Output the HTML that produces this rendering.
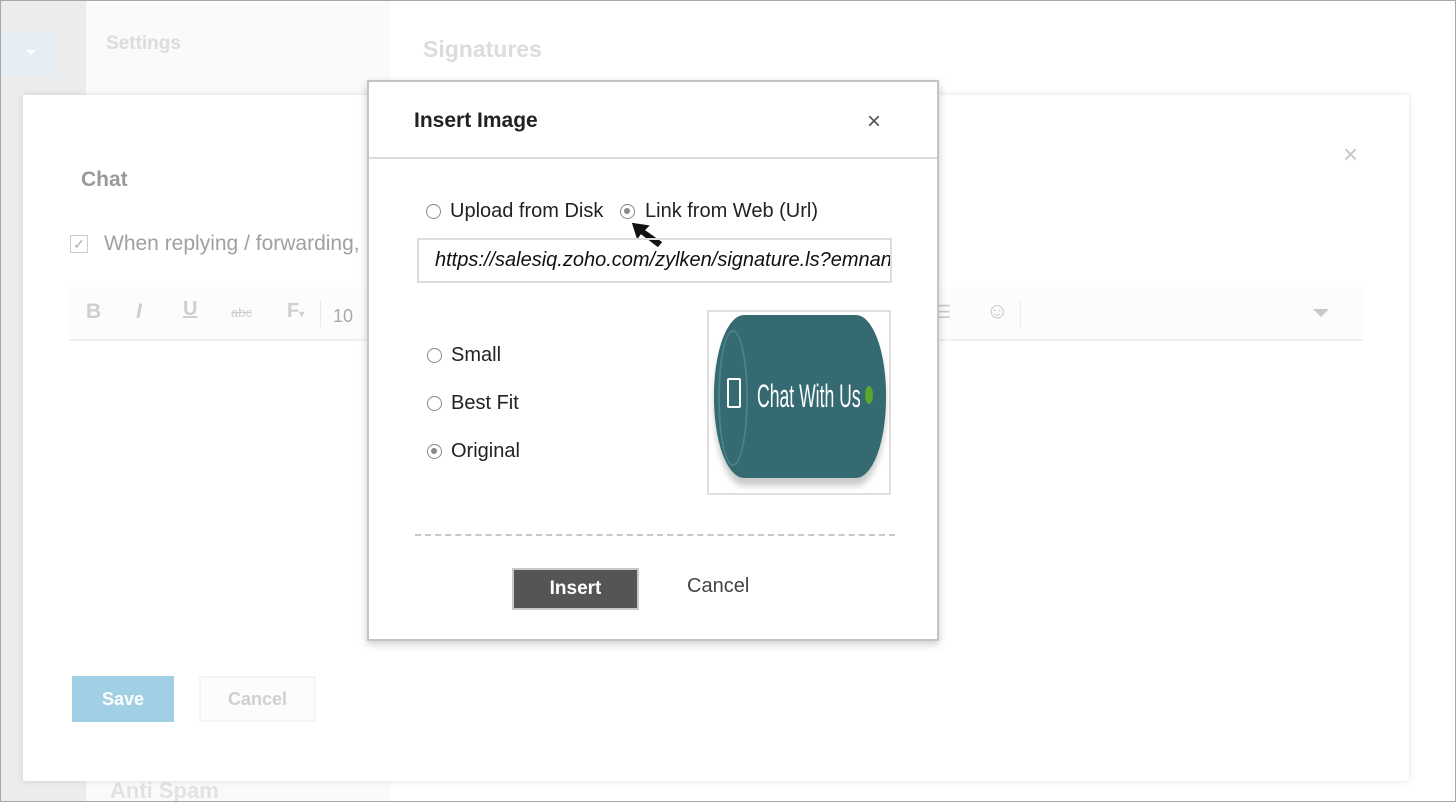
<!DOCTYPE html>
<html><head><meta charset="utf-8"><style>
*{box-sizing:border-box;margin:0;padding:0}
body{width:1456px;height:802px;position:relative;overflow:hidden;font-family:"Liberation Sans",sans-serif;background:#fff}
.abs{position:absolute}
.frame{left:0;top:0;width:1456px;height:802px;border:1px solid #a8a8a8;z-index:50;pointer-events:none}
.radio{position:absolute;width:15px;height:15px;border:1.5px solid #8a8a8a;border-radius:50%;background:#fff}
.radio.on::after{content:"";position:absolute;left:3px;top:3px;width:6px;height:6px;border-radius:50%;background:#888}
.lbl{position:absolute;font-size:20px;color:#222}
</style></head><body>
<div class="abs frame"></div>
<div class="abs" style="left:0;top:0;width:86px;height:802px;background:#ececec"></div>
<div class="abs" style="left:0;top:32px;width:55px;height:44px;background:#e6eef5"></div>
<div class="abs" style="left:26px;top:50px;width:0;height:0;border-left:5px solid transparent;border-right:5px solid transparent;border-top:5px solid #fff"></div>
<div class="abs" style="left:86px;top:0;width:304px;height:802px;background:#fafafa"></div>
<div class="abs" style="left:106px;top:33px;font-size:19px;color:#dcdcdc;font-weight:bold">Settings</div>
<div class="abs" style="left:423px;top:36px;font-size:23px;color:#dcdcdc;font-weight:bold">Signatures</div>
<div class="abs" style="left:110px;top:778px;font-size:22px;color:#e2e2e2;font-weight:bold">Anti Spam</div>
<div class="abs" style="left:23px;top:95px;width:1386px;height:686px;background:#fff;box-shadow:0 0 6px rgba(0,0,0,.12)">
  <div class="abs" style="left:58px;top:73px;font-size:21px;color:#999;font-weight:bold">Chat</div>
  <div class="abs" style="left:1320px;top:44px;font-size:26px;color:#c8c8c8">×</div>
  <div class="abs" style="left:47px;top:140px;width:18px;height:18px;border:1px solid #ccc;color:#aaa;font-size:14px;line-height:16px;text-align:center">✓</div>
  <div class="abs" style="left:81px;top:137px;font-size:21px;color:#a0a0a0">When replying / forwarding,</div>
  <div class="abs" style="left:46px;top:192px;width:1294px;height:54px;background:#fcfcfc;border-bottom:2px solid #f0f0f0"></div>
  <div class="abs" style="left:63px;top:205px;font-size:21px;color:#cfcfcf;font-weight:bold">B</div>
  <div class="abs" style="left:113px;top:205px;font-size:21px;color:#cfcfcf;font-style:italic;font-weight:bold">I</div>
  <div class="abs" style="left:160px;top:203px;font-size:20px;color:#cfcfcf;text-decoration:underline;font-weight:bold">U</div>
  <div class="abs" style="left:208px;top:210px;font-size:13px;color:#cfcfcf;text-decoration:line-through">abc</div>
  <div class="abs" style="left:264px;top:205px;font-size:20px;color:#cfcfcf;font-weight:bold">F<span style="font-size:10px">▾</span></div>
  <div class="abs" style="left:297px;top:206px;width:1px;height:26px;background:#e8e8e8"></div>
  <div class="abs" style="left:310px;top:211px;font-size:18px;color:#aaa">10</div>
  <div class="abs" style="left:912px;top:207px;font-size:18px;color:#ccc">☰</div>
  <div class="abs" style="left:963px;top:203px;font-size:22px;color:#c8c8c8">☺</div>
  <div class="abs" style="left:997px;top:205px;width:1px;height:28px;background:#eee"></div>
  <div class="abs" style="left:1290px;top:214px;width:0;height:0;border-left:8px solid transparent;border-right:8px solid transparent;border-top:8px solid #c8c8c8"></div>
  <div class="abs" style="left:49px;top:581px;width:102px;height:46px;background:#a0cfe6;color:#fff;font-weight:bold;font-size:18px;text-align:center;line-height:46px">Save</div>
  <div class="abs" style="left:176px;top:581px;width:117px;height:46px;border:2px solid #f4f4f4;background:#fcfcfc;color:#d0d0d0;font-weight:bold;font-size:18px;text-align:center;line-height:42px">Cancel</div>
</div>
<div class="abs" style="left:367px;top:80px;width:572px;height:561px;background:#fff;border:2px solid #c4c4c4;box-shadow:0 3px 8px rgba(0,0,0,.2)">
  <div class="abs" style="left:45px;top:27px;font-size:21px;font-weight:bold;color:#222">Insert Image</div>
  <div class="abs" style="left:498px;top:26px;font-size:24px;color:#555">×</div>
  <div class="abs" style="left:0;top:75px;width:568px;height:2px;background:#ddd"></div>
  <div class="radio" style="left:57px;top:122px"></div>
  <div class="lbl" style="left:81px;top:118px">Upload from Disk</div>
  <div class="radio on" style="left:251px;top:122px"></div>
  <div class="lbl" style="left:276px;top:118px">Link from Web (Url)</div>
  <svg class="abs" style="left:260px;top:138px" width="36" height="30" viewBox="0 0 36 30"><path d="M2 2 L22 5 L17 10 L34 22 L29 28 L12 15 L8 21 Z" fill="#111" stroke="#fff" stroke-width="1.2"/></svg>
  <div class="abs" style="left:48px;top:156px;width:475px;height:45px;border:2px solid #ddd;overflow:hidden;white-space:nowrap;font-size:20px;font-style:italic;color:#111;padding:9px 0 0 16px">https://salesiq.zoho.com/zylken/signature.ls?emnan</div>
  <div class="radio" style="left:58px;top:266px"></div>
  <div class="lbl" style="left:82px;top:262px">Small</div>
  <div class="radio" style="left:58px;top:314px"></div>
  <div class="lbl" style="left:82px;top:310px">Best Fit</div>
  <div class="radio on" style="left:58px;top:362px"></div>
  <div class="lbl" style="left:82px;top:358px">Original</div>
  <div class="abs" style="left:338px;top:228px;width:184px;height:185px;border:2px solid #e2dede;background:#fff">
    <div class="abs" style="left:5px;top:3px;width:172px;height:163px;background:#356a72;border-radius:30px/80px;box-shadow:0 8px 6px rgba(0,0,0,.2)"></div>
    <div class="abs" style="left:9px;top:18px;width:30px;height:136px;border:2px solid #4d8189;border-radius:50%"></div>
    <div class="abs" style="left:18px;top:66px;width:14px;height:30px;border:2px solid #fff;border-radius:2px"></div>
    <div class="abs" style="left:48px;top:66px;font-size:32px;color:#fff;transform:scaleX(.55);transform-origin:left;white-space:nowrap">Chat With Us</div>
    <div class="abs" style="left:156px;top:74px;width:8px;height:18px;border-radius:50%;background:#5aa82a"></div>
  </div>
  <div class="abs" style="left:46px;top:452px;width:480px;border-top:2px dashed #c8c8c8"></div>
  <div class="abs" style="left:143px;top:486px;width:127px;height:42px;background:#555;border:2px solid #c8c8c8;color:#fff;font-size:19px;text-align:center;line-height:38px;font-weight:bold">Insert</div>
  <div class="abs" style="left:318px;top:493px;font-size:20px;color:#444">Cancel</div>
</div>
</body></html>
